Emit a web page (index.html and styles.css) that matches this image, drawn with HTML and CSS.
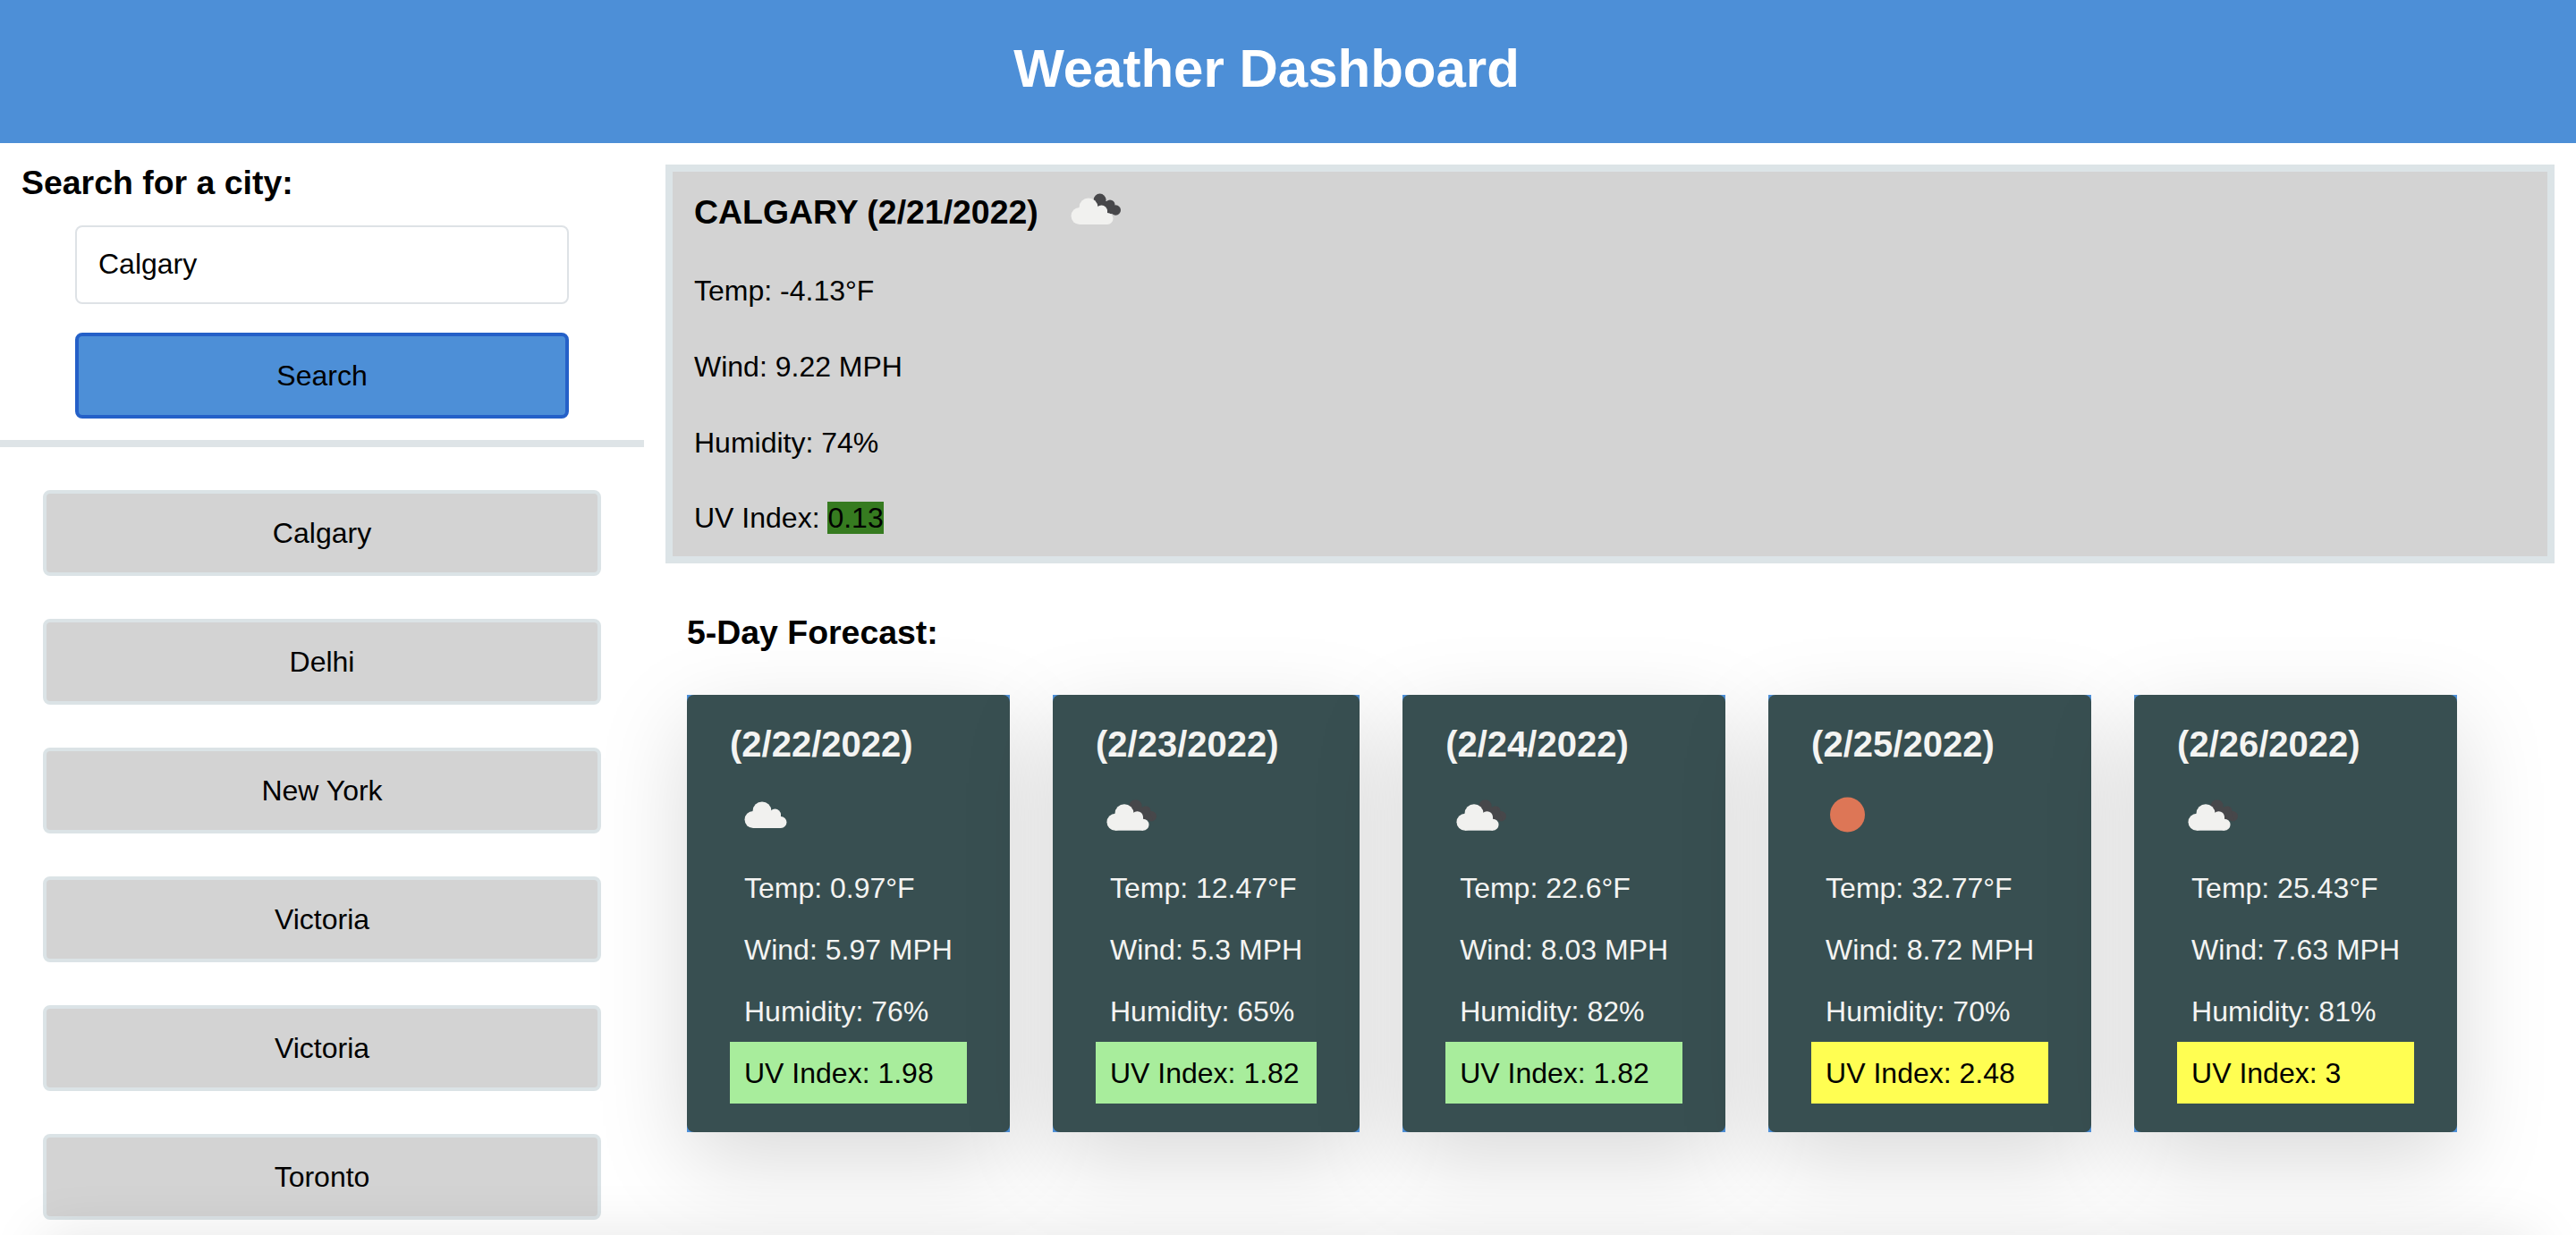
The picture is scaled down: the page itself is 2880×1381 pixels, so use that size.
FILE: index.html
```html
<!DOCTYPE html>
<html lang="en">
<head>
<meta charset="utf-8">
<title>Weather Dashboard</title>
<link rel="stylesheet" href="styles.css">
</head>
<body>
<svg class="defs" aria-hidden="true">
  <defs>
    <g id="cloud">
      <circle cx="42" cy="46.5" r="9.5"/>
      <circle cx="52" cy="37" r="10.5"/>
      <circle cx="66.5" cy="41" r="6.5"/>
      <circle cx="73" cy="49.5" r="6.5"/>
      <rect x="42" y="40" width="31" height="16"/>
    </g>
    <g id="dark">
      <circle cx="64.6" cy="28.6" r="7"/>
      <circle cx="76" cy="34" r="5.5"/>
      <circle cx="82.3" cy="40" r="5.7"/>
      <polygon points="60,30 78,30 84,44 66,44"/>
    </g>
  </defs>
</svg>
<header class="site-header"><h1>Weather Dashboard</h1></header>
<div class="layout">
  <aside class="sidebar">
    <h3 class="search-title">Search for a city:</h3>
    <form class="search-form">
      <input class="search-input" type="text" value="Calgary">
      <button class="search-btn" type="button">Search</button>
    </form>
    <hr class="divider">
    <div class="history">
      <button class="city-btn" type="button">Calgary</button>
      <button class="city-btn" type="button">Delhi</button>
      <button class="city-btn" type="button">New York</button>
      <button class="city-btn" type="button">Victoria</button>
      <button class="city-btn" type="button">Victoria</button>
      <button class="city-btn" type="button">Toronto</button>
    </div>
  </aside>
  <main class="main">
    <section class="current">
      <h2 class="current-title">CALGARY (2/21/2022)
        <svg class="current-icon" viewBox="0 0 100 42" aria-hidden="true">
          <g transform="translate(-23 -21)"><use class="i-dark" href="#dark"/><use class="i-white" href="#cloud"/></g>
        </svg>
      </h2>
      <p>Temp: -4.13°F</p>
      <p>Wind: 9.22 MPH</p>
      <p>Humidity: 74%</p>
      <p>UV Index: <span class="uv-green">0.13</span></p>
    </section>
    <h3 class="forecast-title">5-Day Forecast:</h3>
    <div class="forecast">
      <article class="card"><div class="card-body">
        <h3>(2/22/2022)</h3>
        <svg class="day-icon" viewBox="0 0 100 103" aria-hidden="true"><g transform="translate(-16 15)"><use class="i-white" href="#cloud"/></g></svg>
        <p>Temp: 0.97°F</p><p>Wind: 5.97 MPH</p><p>Humidity: 76%</p>
        <p class="uv uv-low">UV Index: 1.98</p>
      </div></article>
      <article class="card"><div class="card-body">
        <h3>(2/23/2022)</h3>
        <svg class="day-icon" viewBox="0 0 100 103" aria-hidden="true"><g transform="translate(-20 17.7)"><use class="i-dark" href="#dark"/><use class="i-white" href="#cloud"/></g></svg>
        <p>Temp: 12.47°F</p><p>Wind: 5.3 MPH</p><p>Humidity: 65%</p>
        <p class="uv uv-low">UV Index: 1.82</p>
      </div></article>
      <article class="card"><div class="card-body">
        <h3>(2/24/2022)</h3>
        <svg class="day-icon" viewBox="0 0 100 103" aria-hidden="true"><g transform="translate(-20 17.7)"><use class="i-dark" href="#dark"/><use class="i-white" href="#cloud"/></g></svg>
        <p>Temp: 22.6°F</p><p>Wind: 8.03 MPH</p><p>Humidity: 82%</p>
        <p class="uv uv-low">UV Index: 1.82</p>
      </div></article>
      <article class="card"><div class="card-body">
        <h3>(2/25/2022)</h3>
        <svg class="day-icon" viewBox="0 0 100 103" aria-hidden="true"><circle class="i-sun" cx="40.5" cy="56" r="19.5"/></svg>
        <p>Temp: 32.77°F</p><p>Wind: 8.72 MPH</p><p>Humidity: 70%</p>
        <p class="uv uv-mid">UV Index: 2.48</p>
      </div></article>
      <article class="card"><div class="card-body">
        <h3>(2/26/2022)</h3>
        <svg class="day-icon" viewBox="0 0 100 103" aria-hidden="true"><g transform="translate(-20 17.7)"><use class="i-dark" href="#dark"/><use class="i-white" href="#cloud"/></g></svg>
        <p>Temp: 25.43°F</p><p>Wind: 7.63 MPH</p><p>Humidity: 81%</p>
        <p class="uv uv-mid">UV Index: 3</p>
      </div></article>
    </div>
  </main>
</div>
<div class="fold-shadow"></div>
</body>
</html>
```
FILE: styles.css
```css
* { box-sizing: border-box; }
html, body { height: 100%; }
body {
  margin: 0;
  overflow: hidden;
  background: #fff;
  color: #000;
  font-family: "Liberation Sans", Arial, sans-serif;
  font-size: 32px;
  line-height: 37px;
}
.defs { position: absolute; width: 0; height: 0; }
.i-white { fill: #f1f1ef; }
.i-dark { fill: #47474a; }
.i-sun { fill: #dd7656; }

.site-header {
  height: 160px;
  padding: 0 48px 7px 0;
  display: flex;
  align-items: center;
  justify-content: center;
  background: #4d8fd7;
}
.site-header h1 {
  margin: 0;
  color: #fff;
  font-size: 60px;
  line-height: 69px;
  font-weight: 700;
}

.layout { display: flex; }
.sidebar { flex: 0 0 720px; }
.search-title {
  margin: 23px 0 26px;
  padding-left: 24px;
  font-size: 37.44px;
  line-height: 43px;
}
.search-form {
  display: flex;
  flex-direction: column;
  align-items: center;
  gap: 32px;
}
.search-input {
  width: 552px;
  height: 88px;
  padding: 0 24px 2px;
  border: 2px solid #dee2e6;
  border-radius: 8px;
  background: #fff;
  color: #000;
  font: inherit;
  outline: none;
}
.search-btn {
  width: 552px;
  height: 96px;
  border: 4px solid #2460c8;
  border-radius: 8px;
  background: #4d8fd7;
  color: #000;
  font: inherit;
}
.divider {
  height: 8px;
  margin: 24px 0 48px;
  border: 0;
  background: #dee4e7;
}
.history {
  display: flex;
  flex-direction: column;
  align-items: center;
  gap: 48px;
}
.city-btn {
  flex: none;
  width: 624px;
  height: 96px;
  border: 4px solid #dbe3e6;
  border-radius: 8px;
  background: #d3d3d3;
  color: #000;
  font: inherit;
}

.main { flex: 0 0 2112px; margin-left: 24px; padding-top: 24px; }
.current {
  height: 446px;
  padding: 24px;
  border: 8px solid #dce4e7;
  background: #d3d3d3;
}
.current-title {
  display: flex;
  align-items: flex-start;
  height: 42px;
  margin: 0 0 49px;
  font-size: 37.44px;
  line-height: 42px;
  white-space: nowrap;
}
.current-icon {
  flex: none;
  width: 100px;
  height: 42px;
  margin-left: 27px;
  overflow: visible;
}
.current p { margin: 0 0 48px; }
.current p:nth-of-type(3) { margin-bottom: 47px; }
.current p:last-child { margin-bottom: 0; }
.uv-green { background: #367b20; }

.forecast-title {
  margin: 56px 0 48px 24px;
  font-size: 37.44px;
  line-height: 43px;
}
.forecast { display: flex; gap: 48px; margin-left: 24px; }
.card {
  flex: none;
  background: #4d8fd7;
  box-shadow: 0 32px 96px rgba(0, 0, 0, .15);
}
.card-body {
  padding: 32px 48px;
  border-radius: 8px;
  background: #384f51;
  color: #f4f4f2;
}
.card-body h3 {
  margin: 0;
  font-size: 40px;
  line-height: 46px;
}
.day-icon { display: block; width: 100px; height: 103px; }
.card-body p { margin: 0; padding: 17px 16px 15px; white-space: nowrap; }
.card-body .uv { color: #000; }
.uv-low { background: #a8ed9c; }
.uv-mid { background: #fffe52; }

.fold-shadow {
  position: fixed;
  left: 48px;
  right: 48px;
  top: 100%;
  height: 100px;
  box-shadow: 0 0 64px rgba(0, 0, 0, .1);
  pointer-events: none;
}
```
